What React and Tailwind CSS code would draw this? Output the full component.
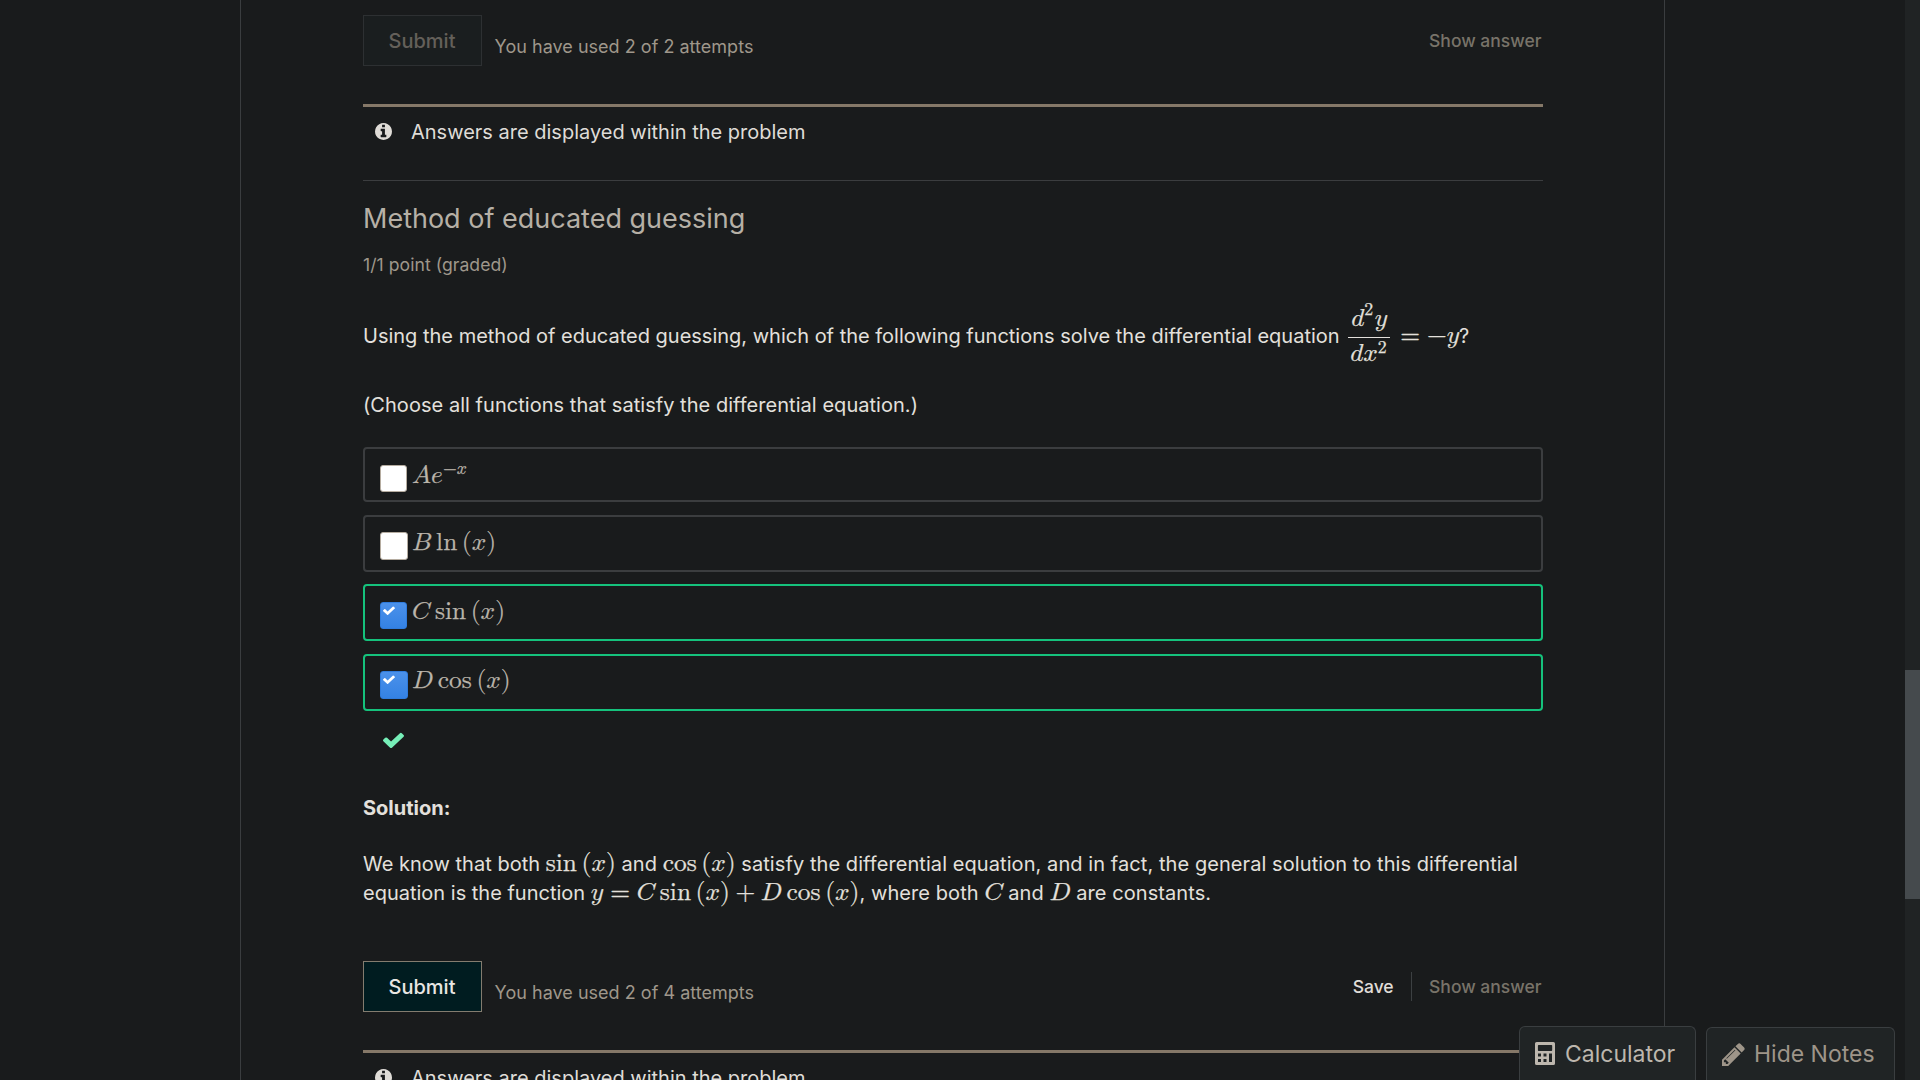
import React from "react";

const PATHS = {
  check: "M1671 566q0 40-28 68l-724 724-136 136q-28 28-68 28t-68-28l-136-136-362-362q-28-28-28-68t28-68l136-136q28-28 68-28t68 28l294 295 656-657q28-28 68-28t68 28l136 136q28 28 28 68z",
  info: "M1152 1376v-160q0-14-9-23t-23-9h-96v-512q0-14-9-23t-23-9h-320q-14 0-23 9t-9 23v160q0 14 9 23t23 9h96v320h-96q-14 0-23 9t-9 23v160q0 14 9 23t23 9h448q14 0 23-9t9-23zm-128-896v-160q0-14-9-23t-23-9h-192q-14 0-23 9t-9 23v160q0 14 9 23t23 9h192q14 0 23-9t9-23zm640 416q0 209-103 385.5t-279.5 279.5-385.5 103-385.5-103-279.5-279.5-103-385.5 103-385.5 279.5-279.5 385.5-103 385.5 103 279.5 279.5 103 385.5z",
  pencil: "M491 1536l91-91-235-235-91 91v107h128v128h107zm523-928q0-22-22-22-10 0-17 7l-542 542q-7 7-7 17 0 22 22 22 10 0 17-7l542-542q7-7 7-17zm-54-192l416 416-832 832h-416v-416zm683 96q0 53-37 90l-166 166-416-416 166-165q36-38 90-38 53 0 91 38l235 234q37 39 37 91z",
};

function Icon({ name, box, className }) {
  return (
    <svg viewBox={box} preserveAspectRatio="none" fill="currentColor" className={className} aria-hidden="true">
      <path d={PATHS[name]} />
    </svg>
  );
}

function CalculatorIcon() {
  return (
    <svg viewBox="0 0 20 23" fill="currentColor" fillRule="evenodd" className="h-[23px] w-5" aria-hidden="true">
      <path d="M1.6 0h16.8a1.6 1.6 0 0 1 1.6 1.6v19.8a1.6 1.6 0 0 1-1.6 1.6H1.6A1.6 1.6 0 0 1 0 21.4V1.6A1.6 1.6 0 0 1 1.6 0zM3.6 3a.7.7 0 0 0-.7.7v4.5c0 .4.3.7.7.7h12.900c.4 0 .7-.3.7-.7V3.700a.7.7 0 0 0-.7-.7zM3 11.400v3h3v-3zM8.500 11.400v3h3v-3zM14 11.400v8.600h3v-8.600zM3 17v3h3v-3zM8.500 17v3h3v-3z" />
    </svg>
  );
}

function M({ children, ...rest }) {
  return (
    <math className="[font-family:'Latin_Modern_Math','Liberation_Serif',serif] text-[25.4px] leading-none tracking-normal [-webkit-text-stroke:0.25px_currentColor]" {...rest}>
      {children}
    </math>
  );
}

// A named function applied to x, with an optional thin space before it.
function Fn({ name, lead }) {
  return (
    <>
      {lead ? <mspace width="0.19em" /> : null}
      <mi>{name}</mi>
      <mspace width="0.18em" />
      <mo stretchy="false" lspace="0" rspace="0">(</mo>
      <mi>x</mi>
      <mo stretchy="false" lspace="0" rspace="0">)</mo>
    </>
  );
}

function Submit({ disabled }) {
  return (
    <button
      type="button"
      disabled={disabled}
      className={
        disabled
          ? "flex h-[51px] w-[119px] items-center justify-center border border-[#2d3032] bg-[#1a1e1f] pt-px pr-px text-xl font-medium text-[#64605a]"
          : "flex h-[51px] w-[119px] items-center justify-center border border-[#837c6f] bg-[#001c20] pt-px pr-px text-xl font-medium text-[#e8e6e3]"
      }
    >
      Submit
    </button>
  );
}

function ActionRow({ disabled, used, save }) {
  return (
    <div className="flex h-[51px] items-center">
      <Submit disabled={disabled} />
      <span className="ml-[12.6px] pt-3 text-[18px] tracking-[0.02px] text-[#9f978b]">You have used {used} attempts</span>
      <div className="ml-auto flex items-center pr-[1.5px] text-[17.5px] font-medium text-[#787369]">
        {save ? <span className="mr-[17px] text-[#e0ddd8]">Save</span> : null}
        {save ? <span className="mr-[17.4px] h-[29px] w-px bg-[#3c4042]" /> : null}
        <span>Show answer</span>
      </div>
    </div>
  );
}

function Notice() {
  return (
    <div className="mt-[38px] h-[76px]">
      <div className="flex h-[54px] items-center border-t-[3px] border-[#857868] pl-3 text-[#dfdcd7]">
        <Icon name="info" box="128 128 1536 1536" className="-mt-[2px] h-[17px] w-[17px]" />
        <span className="ml-[19px]">Answers are displayed within the problem</span>
      </div>
    </div>
  );
}

function Choice({ checked, className, boxClass, mathClass, children }) {
  return (
    <div
      className={
        (checked ? "border-[#15c27c] " : "border-[#3b3d3f] ") +
        "flex items-start rounded-[4px] border-2 pl-[15px] text-[#bbb5ab] " +
        className
      }
    >
      <span className="flex w-8 shrink-0">
        {checked ? (
          <span className={"rounded-[3px] border border-[#2f7bdc] bg-linear-to-b from-[#4b91ea] to-[#3482e4] pt-[3px] pl-[2px] text-white " + boxClass}>
            <Icon name="check" box="121 270 1550 1252" className="h-[9px] w-3" />
          </span>
        ) : (
          <span className={"rounded-[3px] border border-[#b5aca0] bg-white " + boxClass} />
        )}
      </span>
      <span className={"flex items-center " + mathClass}>{children}</span>
    </div>
  );
}

export default function App() {
  return (
    <div className="relative flex h-[1080px] w-[1920px] overflow-hidden bg-[#191b1c] text-xl leading-[29px] text-[#e3e0dc] [font-family:Inter,sans-serif]">
      <main className="ml-60 flex h-full w-[1425px] flex-col border-x border-[#3a3d3f] pt-[15px] pr-[121px] pl-[122px] *:shrink-0">
        <ActionRow disabled used="2 of 2" />
        <Notice />
        <div className="h-px bg-[#3b3d3f]" />
        <h3 className="mt-[20px] text-[27px] leading-[36px] text-[#b6b0a6]">Method of educated guessing</h3>
        <div className="mt-[14px] text-[17.6px] leading-[28px] tracking-[0.04px] text-[#9f978b]">1/1 point (graded)</div>
        <div className="mt-[24.4px] flex h-[65.6px] items-baseline">
          <span>Using the method of educated guessing, which of the following functions solve the differential equation</span>
          <span className="ml-[8.5px] flex items-baseline">
            <M displaystyle="true">
              <mfrac>
                <mrow>
                  <mspace width="0.08em" />
                  <msup><mi>d</mi><mn>2</mn></msup>
                  <mi>y</mi>
                  <mspace width="0.08em" />
                </mrow>
                <mrow>
                  <mspace width="0.08em" />
                  <mi>d</mi>
                  <msup><mi>x</mi><mn>2</mn></msup>
                  <mspace width="0.08em" />
                </mrow>
              </mfrac>
              <mspace width="0.12em" />
              <mo>=</mo>
              <mo form="prefix">−</mo>
              <mi>y</mi>
            </M>
            <span>?</span>
          </span>
        </div>
        <p className="mt-[22px] tracking-[0.04px]">(Choose all functions that satisfy the differential equation.)</p>
        <div className="mt-[27px] flex flex-col">
          <Choice className="h-[55px]" boxClass="mt-4 h-[27px] w-[27px]" mathClass="h-[50px]">
            <M><mi>A</mi><msup><mi>e</mi><mrow><mo form="prefix">−</mo><mi>x</mi></mrow></msup></M>
          </Choice>
          <Choice className="mt-[13px] h-[57px]" boxClass="mt-[15px] h-[28px] w-[28px]" mathClass="h-[54px]">
            <M><mi>B</mi><Fn name="ln" lead /></M>
          </Choice>
          <Choice checked className="mt-3 h-[57px]" boxClass="mt-4 h-[27px] w-[27px]" mathClass="h-[54px]">
            <M><mi>C</mi><Fn name="sin" lead /></M>
          </Choice>
          <Choice checked className="mt-[13px] h-[57px]" boxClass="mt-[15px] h-[28px] w-[28px]" mathClass="h-[52px]">
            <M><mi>D</mi><Fn name="cos" lead /></M>
          </Choice>
        </div>
        <div className="mt-[21px] pl-5 text-[#76efb8]">
          <Icon name="check" box="121 270 1550 1252" className="block h-4 w-[21px]" />
        </div>
        <p className="mt-[46px] font-bold">Solution:</p>
        <p className="mt-[27px] tracking-[0.075px]">
          <span className="tracking-[0.02px]">We know that both </span>
          <M><Fn name="sin" /></M> and <M><Fn name="cos" /></M> satisfy the differential equation, and in fact, the
          general solution to this differential
          <br />
          <span className="tracking-normal">equation is the function </span>
          <M><mi>y</mi><mo>=</mo><mi>C</mi><Fn name="sin" lead /><mo>+</mo><mi>D</mi><Fn name="cos" lead /></M>
          , where both <M><mi>C</mi></M> and <M><mi>D</mi></M> are constants.
        </p>
        <div className="mt-[53px]">
          <ActionRow used="2 of 4" save />
        </div>
        <Notice />
      </main>
      <div className="ml-auto w-[15px] shrink-0 bg-[#202324] pt-[670px]">
        <div className="h-[229px] bg-[#454a4d]" />
      </div>
      <div className="absolute right-[25px] bottom-0 flex items-end gap-[10px] text-[23px] leading-[30px]">
        <div className="flex h-[54px] w-[177px] items-start rounded-t-[6px] border border-b-0 border-[#3a3e40] bg-[#202425] pt-[15px] pl-[15px] text-[#bdb7ae]">
          <CalculatorIcon />
          <span className="-mt-[3px] ml-[10px]">Calculator</span>
        </div>
        <div className="flex h-[53px] w-[189px] items-start rounded-t-[6px] border border-b-0 border-[#3a3e40] bg-[#202425] pt-[15px] pl-[15px] text-[#9e9589]">
          <Icon name="pencil" box="128 128 1536 1536" className="h-[23px] w-[23px]" />
          <span className="-mt-1 ml-[9px]">Hide Notes</span>
        </div>
      </div>
    </div>
  );
}
